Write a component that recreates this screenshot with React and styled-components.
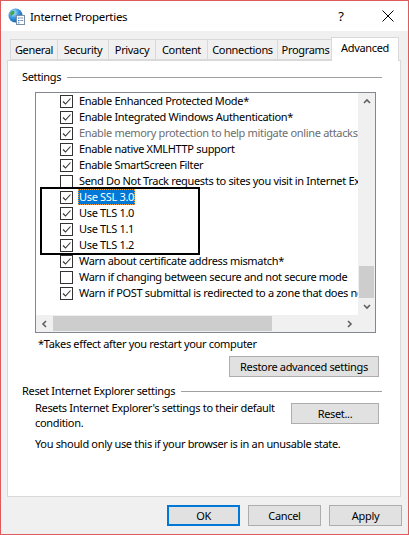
import React from "react";
import styled, { createGlobalStyle } from "styled-components";

const GlobalStyle = createGlobalStyle`
  html, body { margin: 0; padding: 0; background: #fff; }
  body {
    font-family: "Noto Sans", "Open Sans", sans-serif;
    font-size: 11px;
    letter-spacing: -0.33px;
    color: #000;
  }
  * { box-sizing: border-box; }
`;

const Window = styled.div`
  width: 409px;
  height: 535px;
  border: 1px solid #dd5b5b;
  display: flex;
  flex-direction: column;
  background: #f0f0f0;
`;

const TitleBar = styled.div`
  height: 30px;
  flex-shrink: 0;
  background: #fff;
  display: flex;
  align-items: center;
  padding: 0 10px 0 7px;
`;

const Title = styled.span`
  margin-left: 5px;
  font-size: 11.5px;
  letter-spacing: -0.3px;
  flex: 1;
`;

const TitleButton = styled.div`
  width: 20px;
  height: 30px;
  display: flex;
  align-items: center;
  justify-content: center;
  font-size: 13px;
  margin-left: ${(p) => p.$gap || 0}px;
`;

const Body = styled.div`
  flex: 1;
  display: flex;
  flex-direction: column;
  padding: 6px 7px 8px 6px;
`;

const TabStrip = styled.div`
  display: flex;
  align-items: flex-start;
  height: 24px;
  padding-left: 3px;
  flex-shrink: 0;
`;

const Tab = styled.div`
  position: relative;
  width: ${(p) => p.$w}px;
  margin-left: ${(p) => p.$ml}px;
  height: ${(p) => (p.$active ? 24 : 21)}px;
  margin-top: ${(p) => (p.$active ? 0 : 2)}px;
  background: ${(p) => (p.$active ? "#fff" : "#f0f0f0")};
  border: 1px solid #d9d9d9;
  border-bottom: ${(p) => (p.$active ? "none" : "1px solid #d9d9d9")};
  z-index: ${(p) => (p.$active ? 2 : 0)};
  display: flex;
  align-items: center;
  justify-content: center;
  padding-bottom: ${(p) => (p.$active ? 5 : 0)}px;
  white-space: nowrap;
`;

const Panel = styled.div`
  flex: 1;
  margin-top: -1px;
  background: #fff;
  border: 1px solid #d9d9d9;
  display: flex;
  flex-direction: column;
`;

const GroupHeader = styled.div`
  display: flex;
  align-items: center;
  height: 15px;
  margin: ${(p) => p.$mt}px 18px 0 14px;
  gap: 6px;
  white-space: nowrap;
`;

const GroupLine = styled.div`
  flex: 1;
  height: 1px;
  background: #a0a0a0;
  margin-top: 1px;
`;

const ListBox = styled.div`
  position: relative;
  margin: 8px 0 0 27px;
  width: 341px;
  height: 241px;
  border: 1px solid #828790;
  background: #fff;
  display: grid;
  grid-template-columns: 1fr 17px;
  grid-template-rows: 1fr 17px;
`;

const ListContent = styled.div`
  overflow: hidden;
  display: flex;
  flex-direction: column;
`;

const Row = styled.div`
  height: 16px;
  flex-shrink: 0;
  display: flex;
  align-items: center;
  padding-left: 24px;
  white-space: nowrap;
  color: ${(p) => (p.$disabled ? "#6d6d6d" : "#000")};
`;

const CheckBox = styled.span`
  width: 13px;
  height: 13px;
  flex-shrink: 0;
  border: 1px solid #333;
  background: #fff;
  margin-right: 5px;
  display: flex;
  align-items: center;
  justify-content: center;
`;

const RowLabel = styled.span`
  height: 16px;
  line-height: 16px;
  padding: 0 1px;
  background: ${(p) => (p.$selected ? "#0078d7" : "transparent")};
  color: ${(p) => (p.$selected ? "#fff" : "inherit")};
  outline: ${(p) => (p.$selected ? "1px dotted #f0a040" : "none")};
  outline-offset: -1px;
`;

const VScroll = styled.div`
  background: #f0f0f0;
  display: flex;
  flex-direction: column;
`;

const HScroll = styled.div`
  background: #f0f0f0;
  display: flex;
`;

const ArrowBtn = styled.div`
  width: 17px;
  height: 17px;
  flex-shrink: 0;
  display: flex;
  align-items: center;
  justify-content: center;
`;

const VTrack = styled.div`
  flex: 1;
  display: flex;
  flex-direction: column;
  justify-content: flex-end;
`;

const VThumb = styled.div`
  height: 32px;
  margin: 0 1px;
  background: #cdcdcd;
`;

const HTrack = styled.div`
  flex: 1;
  display: flex;
`;

const HThumb = styled.div`
  width: 219px;
  margin: 1px 0;
  background: #cdcdcd;
`;

const Corner = styled.div`
  background: #f0f0f0;
`;

const Annotation = styled.div`
  position: absolute;
  left: 4px;
  top: 94px;
  width: 160px;
  height: 68px;
  border: 2px solid #000;
  pointer-events: none;
`;

const Note = styled.div`
  margin: 3px 0 0 30px;
  line-height: 15px;
`;

const Button = styled.button`
  font-family: inherit;
  font-size: 11px;
  letter-spacing: -0.33px;
  color: #000;
  height: 21px;
  width: ${(p) => p.$w}px;
  background: #e1e1e1;
  border: ${(p) => (p.$primary ? "2px solid #0078d7" : "1px solid #adadad")};
  padding: 0;
  display: flex;
  align-items: center;
  justify-content: center;
`;

const RightButton = styled(Button)`
  align-self: flex-end;
  margin: ${(p) => p.$mt}px 21px 0 0;
`;

const ResetRow = styled.div`
  display: flex;
  justify-content: space-between;
  align-items: flex-start;
  margin: 2px 21px 0 27px;
`;

const ResetText = styled.div`
  line-height: 15px;
`;

const ResetButton = styled(Button)`
  margin-top: 3px;
`;

const Warning = styled.div`
  margin: 6px 0 0 27px;
  line-height: 15px;
`;

const ButtonRow = styled.div`
  margin-top: 8px;
  height: 21px;
  flex-shrink: 0;
  display: flex;
  justify-content: flex-end;
  gap: 8px;
  margin-right: -1px;
`;

const AppIcon = () => (
  <svg width="17" height="17" viewBox="0 0 17 17">
    <defs>
      <radialGradient id="globe" cx="35%" cy="30%" r="75%">
        <stop offset="0" stopColor="#bfe8ff" />
        <stop offset="0.5" stopColor="#3a9ae0" />
        <stop offset="1" stopColor="#145aa8" />
      </radialGradient>
    </defs>
    <circle cx="7.5" cy="7.5" r="7" fill="url(#globe)" />
    <path d="M3 3.5 C5 2 7 3 6.5 5 C6 7 4 6.5 3 8 C2 6.5 2 5 3 3.5 Z" fill="#3fa64a" />
    <path d="M8 9 C10 8.5 12 10 11 12.5 C9.5 13.5 8 12 8 9 Z" fill="#3fa64a" />
    <rect x="8.5" y="7.5" width="8" height="9" fill="#fff" stroke="#7c8ea3" />
    <rect x="10" y="9.5" width="1.5" height="1.2" fill="#2a7bd0" />
    <rect x="12.2" y="9.5" width="3" height="1" fill="#7c8ea3" />
    <rect x="10" y="12" width="1.5" height="1.2" fill="#2a7bd0" />
    <rect x="12.2" y="12" width="3" height="1" fill="#7c8ea3" />
    <rect x="10" y="14.3" width="1.5" height="1" fill="#2a7bd0" />
  </svg>
);

const CloseIcon = () => (
  <svg width="12" height="12" viewBox="0 0 12 12">
    <path d="M0.5 0.5 L11.5 11.5 M11.5 0.5 L0.5 11.5" stroke="#000" strokeWidth="1" />
  </svg>
);

const Check = () => (
  <svg width="11" height="11" viewBox="0 0 11 11">
    <path d="M2 5.5 L4.5 8 L9.5 2.5" fill="none" stroke="#333" strokeWidth="1.1" />
  </svg>
);

const Chevron = ({ dir }) => {
  const paths = {
    up: "M1 5 L4 2 L7 5",
    down: "M1 2 L4 5 L7 2",
    left: "M5 1 L2 4 L5 7",
    right: "M2 1 L5 4 L2 7",
  };
  const vertical = dir === "up" || dir === "down";
  return (
    <svg width={vertical ? 8 : 7} height={vertical ? 7 : 8} viewBox={vertical ? "0 0 8 7" : "0 0 7 8"}>
      <path d={paths[dir]} fill="none" stroke="#606060" strokeWidth="1.6" />
    </svg>
  );
};

const tabs = [
  { label: "General", w: 48, ml: 0 },
  { label: "Security", w: 52, ml: -1 },
  { label: "Privacy", w: 48, ml: -1 },
  { label: "Content", w: 53, ml: -1 },
  { label: "Connections", w: 71, ml: -1 },
  { label: "Programs", w: 57, ml: -1 },
  { label: "Advanced", w: 68, ml: -3, active: true },
];

const items = [
  { text: "Enable Enhanced Protected Mode*", checked: true },
  { text: "Enable Integrated Windows Authentication*", checked: true },
  { text: "Enable memory protection to help mitigate online attacks*", checked: true, disabled: true },
  { text: "Enable native XMLHTTP support", checked: true },
  { text: "Enable SmartScreen Filter", checked: true },
  { text: "Send Do Not Track requests to sites you visit in Internet Explorer*", checked: false },
  { text: "Use SSL 3.0", checked: true, selected: true },
  { text: "Use TLS 1.0", checked: true },
  { text: "Use TLS 1.1", checked: true },
  { text: "Use TLS 1.2", checked: true },
  { text: "Warn about certificate address mismatch*", checked: true },
  { text: "Warn if changing between secure and not secure mode", checked: false },
  { text: "Warn if POST submittal is redirected to a zone that does not permit posts", checked: true },
];

export default function App() {
  return (
    <>
      <GlobalStyle />
      <Window>
        <TitleBar>
          <AppIcon />
          <Title>Internet Properties</Title>
          <TitleButton>?</TitleButton>
          <TitleButton $gap={27}>
            <CloseIcon />
          </TitleButton>
        </TitleBar>
        <Body>
          <TabStrip>
            {tabs.map((t) => (
              <Tab key={t.label} $w={t.w} $ml={t.ml} $active={t.active}>
                {t.label}
              </Tab>
            ))}
          </TabStrip>
          <Panel>
            <GroupHeader $mt={8}>
              Settings
              <GroupLine />
            </GroupHeader>
            <ListBox>
              <ListContent>
                {items.map((it) => (
                  <Row key={it.text} $disabled={it.disabled}>
                    <CheckBox>{it.checked && <Check />}</CheckBox>
                    <RowLabel $selected={it.selected}>{it.text}</RowLabel>
                  </Row>
                ))}
              </ListContent>
              <VScroll>
                <ArrowBtn>
                  <Chevron dir="up" />
                </ArrowBtn>
                <VTrack>
                  <VThumb />
                </VTrack>
                <ArrowBtn>
                  <Chevron dir="down" />
                </ArrowBtn>
              </VScroll>
              <HScroll>
                <ArrowBtn>
                  <Chevron dir="left" />
                </ArrowBtn>
                <HTrack>
                  <HThumb />
                </HTrack>
                <ArrowBtn>
                  <Chevron dir="right" />
                </ArrowBtn>
              </HScroll>
              <Corner />
              <Annotation />
            </ListBox>
            <Note>*Takes effect after you restart your computer</Note>
            <RightButton $w={150} $mt={5}>
              Restore advanced settings
            </RightButton>
            <GroupHeader $mt={6}>
              Reset Internet Explorer settings
              <GroupLine />
            </GroupHeader>
            <ResetRow>
              <ResetText>
                Resets Internet Explorer's settings to their default
                <br />
                condition.
              </ResetText>
              <ResetButton $w={88}>Reset...</ResetButton>
            </ResetRow>
            <Warning>You should only use this if your browser is in an unusable state.</Warning>
          </Panel>
          <ButtonRow>
            <Button $w={73} $primary>
              OK
            </Button>
            <Button $w={73}>Cancel</Button>
            <Button $w={73}>Apply</Button>
          </ButtonRow>
        </Body>
      </Window>
    </>
  );
}
